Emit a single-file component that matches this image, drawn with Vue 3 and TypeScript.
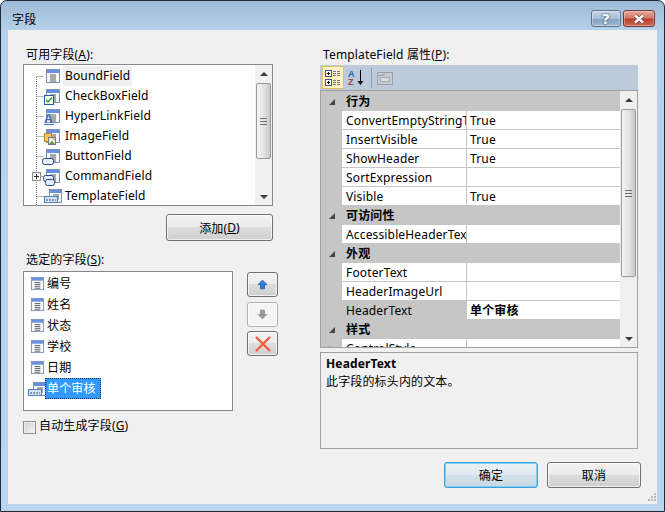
<script setup lang="ts">
interface TreeItem {
  name: string
  kind: 'bound' | 'check' | 'link' | 'image' | 'button' | 'command' | 'template'
}

interface GridRow {
  name: string
  value?: string
  category?: boolean
  selected?: boolean
  collapsed?: boolean
}

const available: TreeItem[] = [
  { name: 'BoundField', kind: 'bound' },
  { name: 'CheckBoxField', kind: 'check' },
  { name: 'HyperLinkField', kind: 'link' },
  { name: 'ImageField', kind: 'image' },
  { name: 'ButtonField', kind: 'button' },
  { name: 'CommandField', kind: 'command' },
  { name: 'TemplateField', kind: 'template' },
]

const chosen = ['编号', '姓名', '状态', '学校', '日期']

const rows: GridRow[] = [
  { name: '行为', category: true },
  { name: 'ConvertEmptyStringToNull', value: 'True' },
  { name: 'InsertVisible', value: 'True' },
  { name: 'ShowHeader', value: 'True' },
  { name: 'SortExpression', value: '' },
  { name: 'Visible', value: 'True' },
  { name: '可访问性', category: true },
  { name: 'AccessibleHeaderText', value: '' },
  { name: '外观', category: true },
  { name: 'FooterText', value: '' },
  { name: 'HeaderImageUrl', value: '' },
  { name: 'HeaderText', value: '单个审核', selected: true },
  { name: '样式', category: true },
  { name: 'ControlStyle', value: '', collapsed: true },
]
</script>

<template>
  <div class="window">
    <svg class="defs" aria-hidden="true">
      <symbol id="field" viewBox="0 0 16 16">
        <rect x="1.5" y="1.5" width="13" height="13" fill="#f6f8fc" stroke="#7d90b6" />
        <rect x="2" y="2" width="12" height="3" fill="#6a8fe0" />
        <path d="M5 7h6M5 9h6M5 11h6M5 13h6" stroke="#5c5c5c" />
      </symbol>
      <symbol id="template" viewBox="0 0 20 16">
        <rect x="6.5" y="1.5" width="12" height="13" fill="#f6f8fc" stroke="#7d90b6" />
        <rect x="7" y="2" width="11" height="3" fill="#6a8fe0" />
        <path d="M10 7h6M10 9h6M10 11h6" stroke="#5c5c5c" />
        <rect x="1.5" y="8.5" width="13" height="6" fill="#d5e3f6" stroke="#4f7fbe" />
        <path d="M3 12h2M6 12h2M9 12h2M12 12h1" stroke="#33507a" />
      </symbol>
    </svg>

    <header class="titlebar">
      <span class="title">字段</span>
      <div class="caption">
        <div class="cap-btn help">?</div>
        <div class="cap-btn close">
          <svg width="14" height="10" viewBox="0 0 14 10">
            <path d="M3 1.5l8 7M11 1.5l-8 7" stroke="#5a2a22" stroke-width="3.6" />
            <path d="M3 1.5l8 7M11 1.5l-8 7" stroke="#fff" stroke-width="2.4" />
          </svg>
        </div>
      </div>
    </header>

    <div class="content">
      <div class="main">
        <section class="left">
          <div class="label">可用字段(<u>A</u>):</div>
          <div class="tree">
            <div class="tree-items">
              <div v-for="(item, i) in available" :key="item.name" class="tree-row">
                <svg class="tree-icon" width="40" height="20" viewBox="0 0 40 20">
                  <path
                    :d="i === 0 ? 'M12.5 11V20M12.5 10.5H20' : 'M12.5 0V20M12.5 10.5H20'"
                    stroke="#777"
                    stroke-dasharray="1 1"
                  />
                  <template v-if="item.kind === 'template'">
                    <use href="#template" x="19" y="2" width="20" height="16" />
                  </template>
                  <template v-else>
                    <use href="#field" x="21" y="2" width="16" height="16" />
                  </template>
                  <g v-if="item.kind === 'check'">
                    <rect x="20.5" y="9.5" width="9" height="9" fill="#fff" stroke="#2b5b9e" />
                    <path d="M22 14l2 2 4-4.5" fill="none" stroke="#2b9a3c" stroke-width="1.4" />
                  </g>
                  <g v-if="item.kind === 'link'">
                    <text x="20" y="17" class="mini-a">A</text>
                    <path d="M20 18.5h10" stroke="#3b7bd0" />
                  </g>
                  <g v-if="item.kind === 'image'">
                    <rect x="20.5" y="7.5" width="7" height="8" fill="#f4c95a" stroke="#b98a24" />
                    <rect x="24.5" y="11.5" width="7" height="7" fill="#e8efe2" stroke="#777" />
                    <path d="M25 18l3-3 3 3z" fill="#5f9a4a" />
                    <path d="M29 12.5l1.5 1.5" stroke="#c8503c" />
                  </g>
                  <rect
                    v-if="item.kind === 'button'"
                    x="18.5"
                    y="12.5"
                    width="11"
                    height="6"
                    rx="2"
                    fill="#e4ecf7"
                    stroke="#1d4a86"
                  />
                  <g v-if="item.kind === 'command'">
                    <rect x="19.5" y="9.5" width="10" height="6" rx="2" fill="#e4ecf7" stroke="#1d4a86" />
                    <rect x="21.5" y="13.5" width="9" height="6" rx="2" fill="#e4ecf7" stroke="#1d4a86" />
                    <rect x="8.5" y="6.5" width="8" height="8" fill="#f2f2f2" stroke="#8f8f8f" />
                    <path d="M10 10.500h5M12.500 8v5" stroke="#333" />
                  </g>
                </svg>
                <span class="tree-text" :class="{ current: i === 0 }">{{ item.name }}</span>
              </div>
            </div>
            <div class="scrollbar">
              <div class="arrow up"></div>
              <div class="track">
                <div class="thumb small"><span class="grip"></span></div>
              </div>
              <div class="arrow down"></div>
            </div>
          </div>

          <div class="add-row">
            <button class="btn add">添加(<u>D</u>)</button>
          </div>

          <div class="label second">选定的字段(<u>S</u>):</div>
          <div class="chosen-row">
            <div class="chosen">
              <div v-for="name in chosen" :key="name" class="chosen-item">
                <svg class="chosen-icon" width="15" height="15"><use href="#field" width="15" height="15" /></svg>
                <span class="chosen-text">{{ name }}</span>
              </div>
              <div class="chosen-item last">
                <svg class="template-icon" width="20" height="16"><use href="#template" width="20" height="16" /></svg>
                <span class="chosen-text active">单个审核</span>
              </div>
            </div>
            <div class="moves">
              <button class="btn move">
                <svg width="11" height="11" viewBox="0 0 14 14">
                  <path d="M7 1.500L12.500 7H9.500V12.500H4.500V7H1.500z" fill="#2f7ee6" stroke="#1b52b0" />
                </svg>
              </button>
              <button class="btn move off">
                <svg width="11" height="11" viewBox="0 0 14 14">
                  <path d="M7 12.500L12.500 7H9.500V1.500H4.500V7H1.500z" fill="#9a9a9a" stroke="#8a8a8a" />
                </svg>
              </button>
              <button class="btn move">
                <svg width="20" height="18" viewBox="0 0 20 18">
                  <path d="M3 2l14 14M17 2L3 16" stroke="#f25c42" stroke-width="2.400" />
                </svg>
              </button>
            </div>
          </div>

          <label class="auto">
            <span class="check"></span>
            <span class="auto-text">自动生成字段(<u>G</u>)</span>
          </label>
        </section>

        <section class="right">
          <div class="label prop-label">TemplateField 属性(<u>P</u>):</div>
          <div class="toolbar">
            <div class="tool on">
              <svg width="18" height="18" viewBox="0 0 18 18">
                <rect x="1.500" y="1.500" width="6" height="6" fill="#fff" stroke="#40558a" />
                <rect x="1.500" y="10.500" width="6" height="6" fill="#fff" stroke="#40558a" />
                <path d="M3 4.500h3M4.500 3v3M3 13.500h3M4.500 12v3" stroke="#111" />
                <path d="M9 2.500h8M9 4.500h8M9 6.500h8M9 11.500h8M9 13.500h8M9 15.500h8" stroke="#777" stroke-dasharray="3 1" />
              </svg>
            </div>
            <div class="tool narrow">
              <svg width="18" height="20" viewBox="0 0 18 20">
                <text x="1" y="9" class="sort-a">A</text>
                <text x="1" y="17" class="sort-z">Z</text>
                <path d="M13.500 2v12" stroke="#000" />
                <path d="M10.500 13h6l-3 4z" fill="#000" />
              </svg>
            </div>
            <div class="sep"></div>
            <div class="tool narrow">
              <svg width="18" height="18" viewBox="0 0 18 18">
                <rect x="1.500" y="3.500" width="15" height="12" fill="#c5cbd2" stroke="#9aa0a6" />
                <path d="M2 6.500h6V3.500" fill="none" stroke="#9aa0a6" />
                <rect x="4.500" y="8.500" width="9" height="4" fill="#d9dde2" stroke="#a3a8ad" />
              </svg>
            </div>
          </div>

          <div class="grid">
            <div class="grid-rows">
              <template v-for="row in rows" :key="row.name">
                <div v-if="row.category" class="cat">
                  <span class="gutter"><span class="expanded"></span></span>
                  <span class="cat-text">{{ row.name }}</span>
                </div>
                <div v-else class="row">
                  <span class="gutter"><span v-if="row.collapsed" class="collapsed"></span></span>
                  <span class="name" :class="{ selected: row.selected }">{{ row.name }}</span>
                  <span class="value" :class="{ bold: row.selected }">{{ row.value }}</span>
                </div>
              </template>
            </div>
            <div class="scrollbar">
              <div class="arrow up"></div>
              <div class="track">
                <div class="thumb large"><span class="grip"></span></div>
              </div>
              <div class="arrow down"></div>
            </div>
          </div>

          <div class="desc">
            <div class="desc-title">HeaderText</div>
            <div class="desc-text">此字段的标头内的文本。</div>
          </div>
        </section>
      </div>

      <footer class="footer">
        <button class="btn action default">确定</button>
        <button class="btn action">取消</button>
      </footer>

      <svg class="sizer" width="12" height="12" viewBox="0 0 12 12">
        <path d="M9 1h2v2H9zM6 4h2v2H6zM9 4h2v2H9zM3 7h2v2H3zM6 7h2v2H6zM9 7h2v2H9z" fill="#b4b4b4" />
      </svg>
    </div>
  </div>
</template>

<style>
html,
body {
  margin: 0;
  background: #fff;
}
</style>

<style scoped>
.defs {
  display: none;
}

.window {
  box-sizing: border-box;
  width: 665px;
  height: 512px;
  display: flex;
  flex-direction: column;
  border: 1px solid #1e2b36;
  border-radius: 7px 7px 0 0;
  background: linear-gradient(to bottom, #9cbad6 0, #b7d1ea 30px, #b9d4ee 100%);
  font-family: 'Noto Sans', 'Noto Sans CJK SC', sans-serif;
  font-size: 12px;
  letter-spacing: 0.15px;
  color: #000;
  overflow: hidden;
}

.titlebar {
  height: 29px;
  flex: none;
  display: flex;
  justify-content: space-between;
  padding: 0 9px 0 11px;
}

.title {
  line-height: 37px;
  height: 29px;
}

.caption {
  display: flex;
  gap: 2px;
  padding-top: 9px;
}

.cap-btn {
  box-sizing: border-box;
  height: 17px;
  display: flex;
  align-items: center;
  justify-content: center;
  border: 1px solid #5c7389;
  border-radius: 3px;
}

.help {
  width: 30px;
  background: linear-gradient(to bottom, #c4d6e8 0, #a6bfd8 50%, #84a1bf 51%, #9db8d2 100%);
  color: #fff;
  font-family: 'DejaVu Sans', sans-serif;
  font-weight: bold;
  font-size: 14px;
  text-shadow: 0 0 2px #3c4f62, 0 0 1px #3c4f62;
  box-shadow: inset 0 0 0 1px rgba(255, 255, 255, 0.35);
}

.close {
  width: 32px;
  border-color: #6a3a34;
  background: linear-gradient(to bottom, #e4a79a 0, #d2786a 48%, #b83c2b 52%, #cf6a55 100%);
  box-shadow: inset 0 0 0 1px rgba(255, 255, 255, 0.3);
}

.content {
  position: relative;
  flex: 1;
  min-height: 0;
  margin: 0 7px 7px;
  background: #f0f0f0;
  display: flex;
  flex-direction: column;
  justify-content: space-between;
}

.main {
  display: flex;
  gap: 42px;
  padding-top: 16px;
}

.left {
  box-sizing: border-box;
  width: 270px;
  padding-left: 15px;
}

.right {
  width: 318px;
}

.label {
  height: 18px;
  line-height: 18px;
  padding-left: 3px;
}

.second {
  margin-top: 10px;
  margin-bottom: 2px;
}

.tree {
  box-sizing: border-box;
  width: 250px;
  height: 142px;
  display: flex;
  border: 1px solid #828790;
  background: #fff;
}

.tree-items {
  flex: 1;
  min-width: 0;
  overflow: hidden;
  padding-top: 1px;
}

.tree-row {
  height: 20px;
  display: flex;
  align-items: center;
}

.tree-icon {
  flex: none;
  margin-right: -1px;
}

.tree-text {
  height: 20px;
  line-height: 20px;
  padding: 0 2px;
}

.current {
  background: #f0f0f0;
}

.mini-a {
  font-family: 'Liberation Sans', sans-serif;
  font-weight: bold;
  font-size: 12px;
  fill: #2d6fc9;
}

.scrollbar {
  flex: none;
  width: 17px;
  display: flex;
  flex-direction: column;
  background: #f0f0f0;
}

.arrow {
  height: 17px;
  flex: none;
  display: flex;
  align-items: center;
  justify-content: center;
}

.arrow::before {
  content: '';
  border-left: 4px solid transparent;
  border-right: 4px solid transparent;
}

.up::before {
  border-bottom: 4px solid #3a3a3a;
}

.down::before {
  border-top: 4px solid #3a3a3a;
}

.track {
  flex: 1;
  min-height: 0;
  padding: 1px;
}

.thumb {
  box-sizing: border-box;
  display: flex;
  align-items: center;
  justify-content: center;
  border: 1px solid #97999c;
  border-radius: 2px;
  background: linear-gradient(to right, #f4f4f4, #e4e4e4 50%, #c9c9c9);
}

.thumb.small {
  height: 76px;
}

.thumb.large {
  height: 168px;
}

.grip {
  width: 7px;
  height: 7px;
  background: repeating-linear-gradient(to bottom, #6e6e6e 0, #6e6e6e 1px, transparent 1px, transparent 3px);
}

.add-row {
  width: 250px;
  margin-top: 8px;
  display: flex;
  justify-content: flex-end;
}

.btn {
  box-sizing: border-box;
  border: 1px solid #707070;
  border-radius: 3px;
  padding: 0;
  font: inherit;
  letter-spacing: inherit;
  color: #000;
  background: linear-gradient(to bottom, #f2f2f2 0, #ebebeb 48%, #dddddd 50%, #cfcfcf 100%);
  box-shadow: inset 0 0 0 1px rgba(255, 255, 255, 0.7);
  display: flex;
  align-items: center;
  justify-content: center;
}

.add {
  width: 107px;
  height: 27px;
}

.chosen-row {
  display: flex;
  gap: 14px;
}

.chosen {
  box-sizing: border-box;
  width: 210px;
  height: 140px;
  border: 1px solid #828790;
  background: #fff;
  padding-top: 1px;
}

.chosen-item {
  height: 21px;
  display: flex;
  align-items: center;
  padding-left: 6px;
}

.chosen-icon {
  flex: none;
  margin-right: 1px;
}

.chosen-text {
  line-height: 21px;
  padding: 0 1px;
}

.last {
  padding-left: 3px;
}

.template-icon {
  flex: none;
  margin-right: -2px;
}

.active {
  box-sizing: border-box;
  width: 56px;
  height: 21px;
  line-height: 19px;
  padding: 0 1px;
  background: #3399ff;
  color: #fff;
  border: 1px dotted #12385f;
}

.moves {
  display: flex;
  flex-direction: column;
  gap: 4.5px;
  padding-top: 1px;
}

.move {
  width: 31px;
  height: 25px;
}

.off {
  border-color: #adb2b5;
  background: #f4f4f4;
}

.auto {
  margin-top: 10px;
  display: flex;
  align-items: flex-start;
  gap: 3px;
}

.check {
  box-sizing: border-box;
  width: 13px;
  height: 13px;
  border: 1px solid #8e8f8f;
  background: linear-gradient(135deg, #d0d0d0, #f6f6f6);
  box-shadow: inset 0 0 0 1px #eee;
}

.auto-text {
  line-height: 13px;
  margin-top: -2px;
}

.prop-label {
  margin-bottom: 1px;
}

.toolbar {
  height: 25px;
  display: flex;
  align-items: center;
  gap: 2px;
  padding-left: 2px;
  background: #bccadb;
}

.tool {
  box-sizing: border-box;
  height: 23px;
  min-width: 22px;
  display: flex;
  align-items: center;
  justify-content: center;
  border: 1px solid transparent;
}

.narrow {
  min-width: 20px;
}

.on {
  border-color: #e5c365;
  background: #fff1c9;
}

.sep {
  width: 1px;
  height: 20px;
  background: #8e9db0;
  margin: 0 1px 0 3px;
}

.sort-a,
.sort-z {
  font-family: 'Liberation Sans', sans-serif;
  font-size: 9px;
  font-weight: bold;
}

.sort-a {
  fill: #2d5fb8;
}

.sort-z {
  fill: #a8403c;
}

.grid {
  box-sizing: border-box;
  height: 258px;
  display: flex;
  border: 1px solid #a0a0a0;
  background: #fff;
  overflow: hidden;
}

.grid-rows {
  flex: 1;
  min-width: 0;
  overflow: hidden;
  padding-top: 1px;
  background: #c6c6c6;
}

.cat,
.row {
  display: flex;
  height: 19px;
  line-height: 19px;
}

.cat {
  background: #c6c6c6;
}

.gutter {
  flex: none;
  width: 21px;
  position: relative;
  background: #c6c6c6;
  display: flex;
  align-items: center;
  justify-content: center;
}

.expanded {
  width: 0;
  height: 0;
  border-left: 6px solid transparent;
  border-bottom: 6px solid #444;
}

.collapsed {
  width: 0;
  height: 0;
  border-left: 5px solid #b0b0b0;
  border-top: 4px solid transparent;
  border-bottom: 4px solid transparent;
}

.cat-text {
  padding-left: 4px;
  font-weight: bold;
}

.name {
  box-sizing: border-box;
  flex: none;
  width: 125px;
  padding-left: 4px;
  overflow: hidden;
  white-space: nowrap;
  background: #fff;
  border-right: 1px solid #c6c6c6;
  border-bottom: 1px solid #c6c6c6;
}

.name.selected {
  background: #c6c6c6;
}

.value {
  box-sizing: border-box;
  flex: 1;
  padding-left: 3px;
  background: #fff;
  border-bottom: 1px solid #c6c6c6;
}

.bold {
  font-weight: bold;
}

.desc {
  box-sizing: border-box;
  height: 97px;
  margin-top: 4px;
  border: 1px solid #a0a0a0;
  padding: 2px 5px;
  line-height: 18px;
}

.desc-title {
  font-weight: bold;
}

.footer {
  display: flex;
  justify-content: flex-end;
  gap: 9px;
  padding: 0 16px 16px 0;
}

.action {
  width: 94px;
  height: 26px;
}

.default {
  border-color: #3c9fd8;
  background: linear-gradient(to bottom, #edf3f7 0, #dfe9ef 48%, #d3e0e8 50%, #c9d8e2 100%);
  box-shadow: inset 0 0 0 1px #7fd0f0;
}

.sizer {
  position: absolute;
  right: 0;
  bottom: 0;
}
</style>
